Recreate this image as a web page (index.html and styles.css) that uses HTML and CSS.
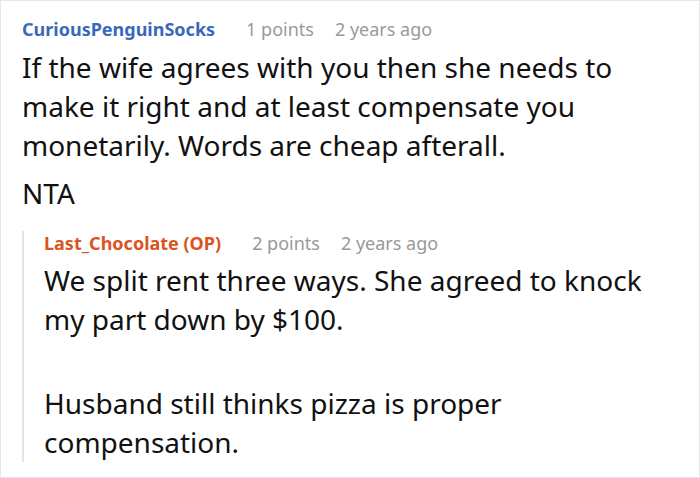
FILE: index.html
```html
<!DOCTYPE html>
<html>
<head>
<meta charset="utf-8">
<link rel="stylesheet" href="styles.css">
</head>
<body>
<div class="frame">
  <div class="comment">
    <div class="meta">
      <span class="name">CuriousPenguinSocks</span>
      <span class="info">1 points</span>
      <span class="info">2 years ago</span>
    </div>
    <div class="text">
      <p>If the wife agrees with you then she needs to make it right and at least compensate you monetarily. Words are cheap afterall.</p>
      <p>NTA</p>
    </div>
    <div class="reply">
      <div class="meta">
        <span class="name op">Last_Chocolate (OP)</span>
        <span class="info">2 points</span>
        <span class="info">2 years ago</span>
      </div>
      <div class="text">
        <p>We split rent three ways. She agreed to knock my part down by $100.<br>&nbsp;</p>
        <p>Husband still thinks pizza is proper compensation.</p>
      </div>
    </div>
  </div>
</div>
</body>
</html>
```
FILE: styles.css
```css
html, body { margin: 0; padding: 0; background: #fff; }
.frame {
  width: 700px;
  height: 478px;
  box-sizing: border-box;
  border: 1px solid #e6e6e6;
  padding: 16px 20px 0 21px;
  font-family: "Noto Sans", "Open Sans", sans-serif;
  overflow: hidden;
}
.meta { display: flex; align-items: baseline; height: 24px; line-height: 24px; }
.name { font-size: 18px; font-weight: 700; color: #3a69b9; margin-right: 31px; }
.name.op { color: #d9541f; }
.info { font-size: 18px; color: #999; margin-right: 21px; }
.text { margin-top: 7px; font-size: 28px; line-height: 39px; color: #111; }
.text p { margin: 0; }
.text p + p { margin-top: 9px; }
.reply {
  margin-top: 31px;
  border-left: 2px solid #e3e3e3;
  padding-left: 20px;
}
.reply .meta { margin-top: -13px; }
.reply .text { margin-top: 6px; }
.reply .text p + p { margin-top: 6px; }
```
